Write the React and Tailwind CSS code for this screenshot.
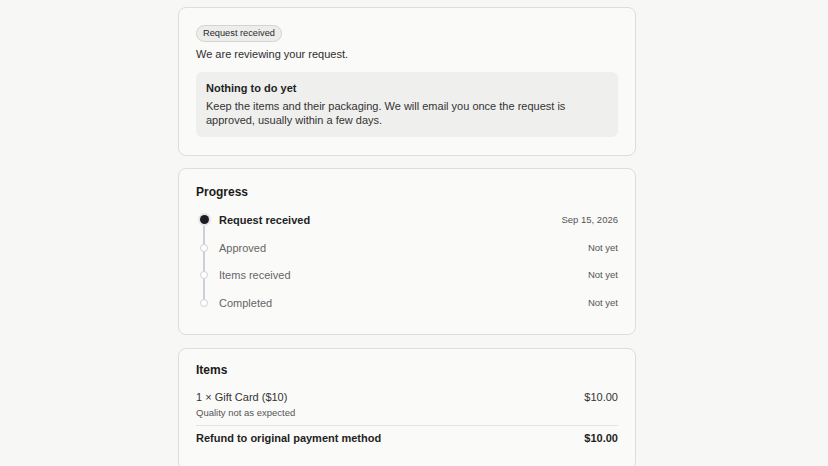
import React from 'react';

const steps = [
  { label: 'Request received', date: 'Sep 15, 2026', done: true },
  { label: 'Approved', date: 'Not yet', done: false },
  { label: 'Items received', date: 'Not yet', done: false },
  { label: 'Completed', date: 'Not yet', done: false },
];

const Card = ({ className = '', children }) => (
  <section className={`w-[458px] rounded-[8px] border border-[#dedddb] bg-[#fafaf9] px-[17px] ${className}`}>
    {children}
  </section>
);

const App = () => {
  return (
    <div
      className="min-h-screen bg-[#f7f7f6] pl-[178px] pt-[7px] text-[#1f1f1f]"
      style={{ fontFamily: '"Liberation Sans", Arial, sans-serif' }}
    >
      {/* Estado actual */}
      <Card className="pt-[17px] pb-[18px]">
        <div className="flex h-[17px] w-fit items-center rounded-full border border-[#d3d3d0] bg-[#ededeb] px-[6px] text-[9.25px] leading-none text-[#2b2b2b]">
          Request received
        </div>
        <p className="mt-[5px] text-[11px] leading-[14px] text-[#2e2e2e]">We are reviewing your request.</p>
        <div className="mt-[11px] h-[65px] rounded-[6px] bg-[#efefee] px-[10px] pt-[9px]">
          <p className="text-[11px] font-bold leading-[14px] text-[#1f1f1f]">Nothing to do yet</p>
          <p className="mt-[4px] text-[11px] leading-[14.3px] text-[#333]">
            Keep the items and their packaging. We will email you once the request is
            <br />
            approved, usually within a few days.
          </p>
        </div>
      </Card>

      {/* Progreso */}
      <Card className="mt-[12px] pt-[16px] pb-[17px]">
        <h2 className="text-[12px] font-bold leading-[14px] text-[#1a1a1a]">Progress</h2>
        <div className="relative mt-[7px]">
          <div className="absolute left-[7.25px] top-[14px] h-[83px] w-[1.5px] bg-[#cbd0d8]" />
          {steps.map((s) => (
            <div key={s.label} className="relative flex h-[27.7px] items-center">
              <div className="flex w-4 justify-center">
                {s.done ? (
                  <span className="h-[9px] w-[9px] rounded-full bg-[#1e1b22] ring-2 ring-[#e6e6e6]" />
                ) : (
                  <span className="h-[8px] w-[8px] rounded-full border border-[#d2d2d2] bg-white" />
                )}
              </div>
              <span
                className={`ml-[7px] flex-1 text-[11px] leading-[14px] ${
                  s.done ? 'font-bold text-[#222]' : 'text-[#666]'
                }`}
              >
                {s.label}
              </span>
              <span className="text-[9.5px] leading-[12px] text-[#555]">{s.date}</span>
            </div>
          ))}
        </div>
      </Card>

      {/* Artículos */}
      <Card className="mt-[13px] pt-[14px] pb-[24px]">
        <h2 className="text-[12px] font-bold leading-[14px] text-[#1a1a1a]">Items</h2>
        <div className="mt-[13px] flex items-center justify-between text-[11px] leading-[14px] text-[#333]">
          <span>1 × Gift Card ($10)</span>
          <span>$10.00</span>
        </div>
        <p className="mt-[3px] text-[9.5px] leading-[12px] text-[#555]">Quality not as expected</p>
        <div className="mt-[6px] border-t border-[#e3e3e1] pt-[5px]">
          <div className="flex items-center justify-between text-[11px] font-bold leading-[14px] text-[#1f1f1f]">
            <span>Refund to original payment method</span>
            <span>$10.00</span>
          </div>
        </div>
      </Card>
    </div>
  );
};

export default App;
